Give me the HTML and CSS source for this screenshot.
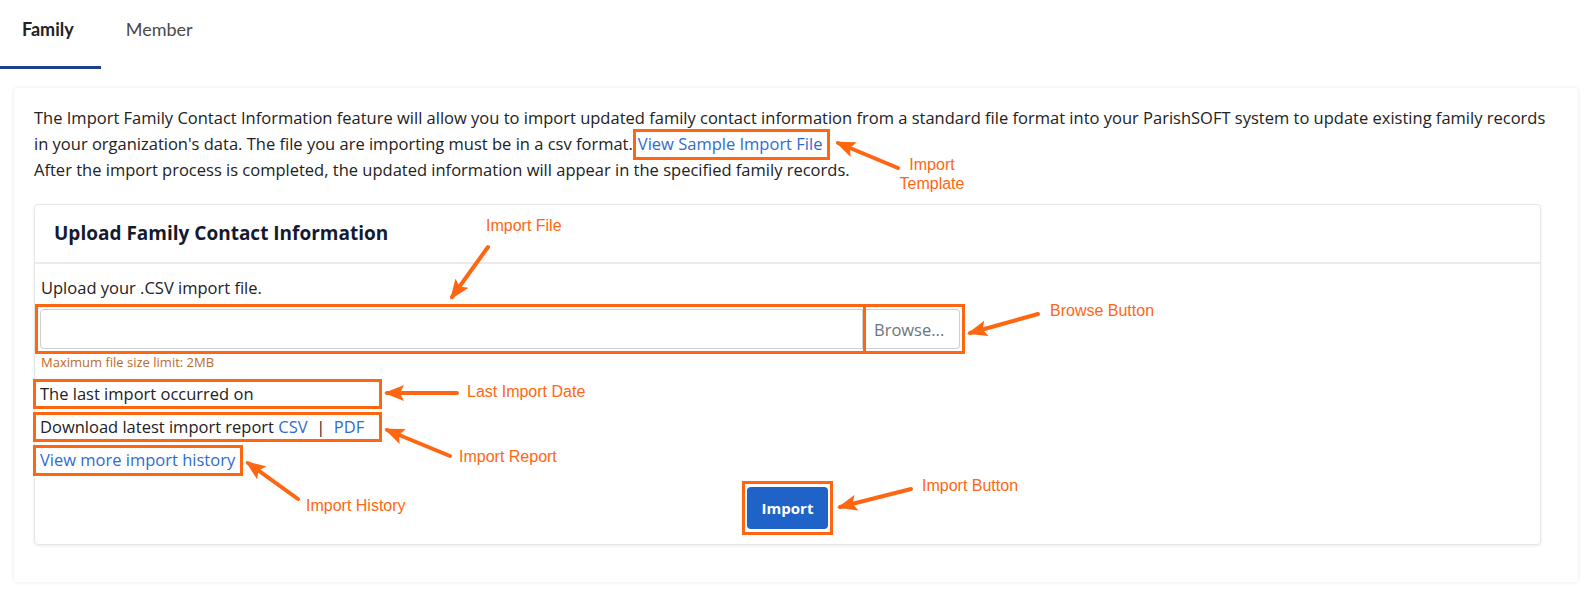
FILE: index.html
```html
<!DOCTYPE html>
<html lang="en">
<head>
    <meta charset="UTF-8">
    <meta name="viewport" content="width=device-width, initial-scale=1.0">
    <title>Import Family Contact Information</title>
    <link rel="stylesheet" href="styles.css">
</head>
<body>

    <div id="pagewrap">

        <!-- Tabs -->
        <ul class="tabs">
            <li class="tab active">Family</li>
            <li class="tab">Member</li>
        </ul>

        <!-- Main panel -->
        <div class="panel">
            <p class="intro">The Import Family Contact Information feature will allow you to import updated family contact information from a standard file format into your ParishSOFT system to update existing family records<br>in your organization's data. The file you are importing must be in a csv format.<a href="#" class="mark link-mark">View Sample Import File</a><br>After the import process is completed, the updated information will appear in the specified family records.</p>

            <div class="card">
                <div class="card-header">
                    <h3>Upload Family Contact Information</h3>
                </div>
                <div class="card-body">
                    <div class="upload-label">Upload your .CSV import file.</div>

                    <div class="file-mark">
                        <div class="file-field"><input type="text" class="file-input"></div>
                        <div class="browse-mark"><button class="browse-btn">Browse...</button></div>
                    </div>
                    <div class="size-note">Maximum file size limit: 2MB</div>

                    <div class="mark row-mark">The last import occurred on</div>
                    <div class="mark row-mark">Download latest import report <a href="#">CSV</a>&nbsp; |&nbsp; <a href="#">PDF</a></div>
                    <div class="mark history-mark"><a href="#">View more import history</a></div>

                    <div class="import-row">
                        <div class="mark button-mark"><button class="import-btn">Import</button></div>
                    </div>
                </div>
            </div>
        </div>

        <!-- Annotation arrows drawn over the page -->
        <svg class="arrows" width="1596" height="598" viewBox="0 0 1596 598">
            <defs>
                <marker id="head" markerUnits="userSpaceOnUse" markerWidth="20" markerHeight="16" refX="17" refY="8" orient="auto">
                    <path d="M0,0 L20,8 L0,16 L4,8 z" fill="#ff6611"/>
                </marker>
            </defs>
            <g stroke="#ff6611" stroke-width="4" stroke-linecap="round" marker-end="url(#head)">
                <line x1="898" y1="168" x2="838" y2="143"/>
                <line x1="488" y1="247" x2="452" y2="297"/>
                <line x1="1038" y1="314" x2="970" y2="333"/>
                <line x1="457" y1="393" x2="387" y2="393"/>
                <line x1="450" y1="456" x2="387" y2="430"/>
                <line x1="298" y1="499" x2="248" y2="463"/>
                <line x1="911" y1="489" x2="840" y2="507"/>
            </g>
        </svg>

        <!-- Annotation labels -->
        <span class="note note-template">Import<br>Template</span>
        <span class="note note-file">Import File</span>
        <span class="note note-browse">Browse Button</span>
        <span class="note note-last">Last Import Date</span>
        <span class="note note-report">Import Report</span>
        <span class="note note-history">Import History</span>
        <span class="note note-button">Import Button</span>
    </div>

</body>
</html>
```

FILE: styles.css
```css
/* General styles */
body {
    margin: 0;
    font-family: "Open Sans", Arial, sans-serif;
    color: #222;
    background-color: #fff;
}

#pagewrap {
    position: relative;
    width: 1596px;
    height: 598px;
    overflow: hidden;
}

a {
    color: #2f6bd0;
    text-decoration: none;
}

/* Tabs */
.tabs {
    list-style: none;
    margin: 0;
    padding: 0;
    display: flex;
    font-family: Lato, sans-serif;
    font-size: 18px;
    line-height: 24px;
}

.tab {
    padding: 17px 27px 25px 25px;
    border-bottom: 3px solid transparent;
    color: #4a4a4a;
}

.tab:first-child {
    padding-left: 22px;
}

.tab.active {
    font-weight: 700;
    color: #222;
    border-bottom-color: #1c3f86;
}

/* Main panel */
.panel {
    margin: 19px 18px 0 14px;
    padding: 17px 20px 37px;
    border-radius: 4px;
    box-shadow: 0 0 4px rgba(0, 0, 0, 0.1);
}

.intro {
    margin: 0 0 21px;
    font-size: 16.5px;
    line-height: 26px;
    white-space: nowrap;
}

/* Annotation boxes */
.mark {
    border: 3px solid #ff6611;
}

.link-mark {
    padding: 0 5px 2px 2px;
}

/* Upload card */
.card {
    margin-right: 17px;
    border: 1px solid #e6e6e6;
    border-radius: 4px;
    box-shadow: 0 1px 3px rgba(0, 0, 0, 0.08);
}

.card-header {
    padding: 16px 20px 17px 19px;
    border-bottom: 2px solid #ebebeb;
}

.card-header h3 {
    margin: 0;
    font-family: "Open Sans", Arial, sans-serif;
    font-size: 19px;
    line-height: 24px;
    font-weight: 700;
    color: #141a30;
}

.card-body {
    padding: 12px 0 9px;
    font-size: 16.5px;
    line-height: 24px;
}

.upload-label {
    padding-left: 6px;
    margin-bottom: 4px;
}

.file-mark {
    display: flex;
    width: 924px;
    border: 3px solid #ff6611;
}

.file-field {
    padding: 2px 0 2px 2px;
}

.file-input {
    display: block;
    box-sizing: border-box;
    width: 823px;
    height: 40px;
    margin: 0;
    border: 1px solid #cfcfcf;
    border-radius: 4px 0 0 4px;
    background: #fff;
}

.browse-mark {
    padding: 2px 2px 2px 0;
    border-left: 3px solid #ff6611;
}

.browse-btn {
    display: block;
    box-sizing: border-box;
    width: 94px;
    height: 40px;
    margin: 0;
    padding: 0 6px 0 8px;
    border: 1px solid #cfcfcf;
    border-left: none;
    border-radius: 0 4px 4px 0;
    background: #fff;
    color: #6c757d;
    font-family: "Open Sans", Arial, sans-serif;
    font-size: 16.5px;
    text-align: left;
}

.size-note {
    padding-left: 6px;
    font-size: 13px;
    line-height: 16px;
    color: #c0692c;
}

.row-mark {
    width: 339px;
    margin: 3px 0 0 -2px;
    padding-left: 4px;
}

.size-note + .row-mark {
    margin-top: 9px;
}

.history-mark {
    width: 200px;
    margin: 3px 0 0 -2px;
    padding: 0 0 1px 4px;
}

.import-row {
    display: flex;
    justify-content: center;
    margin-top: 5px;
}

.button-mark {
    padding: 3px 2px;
}

.import-btn {
    display: block;
    width: 81px;
    height: 42px;
    border: none;
    border-radius: 4px;
    background-color: #1f63c9;
    color: #fff;
    font-family: "Open Sans", Arial, sans-serif;
    font-size: 15px;
    font-weight: 700;
}

/* Annotation layer */
.arrows {
    position: absolute;
    top: 0;
    left: 0;
    pointer-events: none;
}

.note {
    position: absolute;
    font-family: "Liberation Sans", Arial, sans-serif;
    font-size: 16px;
    line-height: 19px;
    color: #ff6611;
    white-space: nowrap;
}

.note-template {
    left: 893px;
    top: 155px;
    width: 78px;
    text-align: center;
}

.note-file { left: 486px; top: 216px; }
.note-browse { left: 1050px; top: 301px; }
.note-last { left: 467px; top: 382px; }
.note-report { left: 459px; top: 447px; }
.note-history { left: 306px; top: 496px; }
.note-button { left: 922px; top: 476px; }
```
